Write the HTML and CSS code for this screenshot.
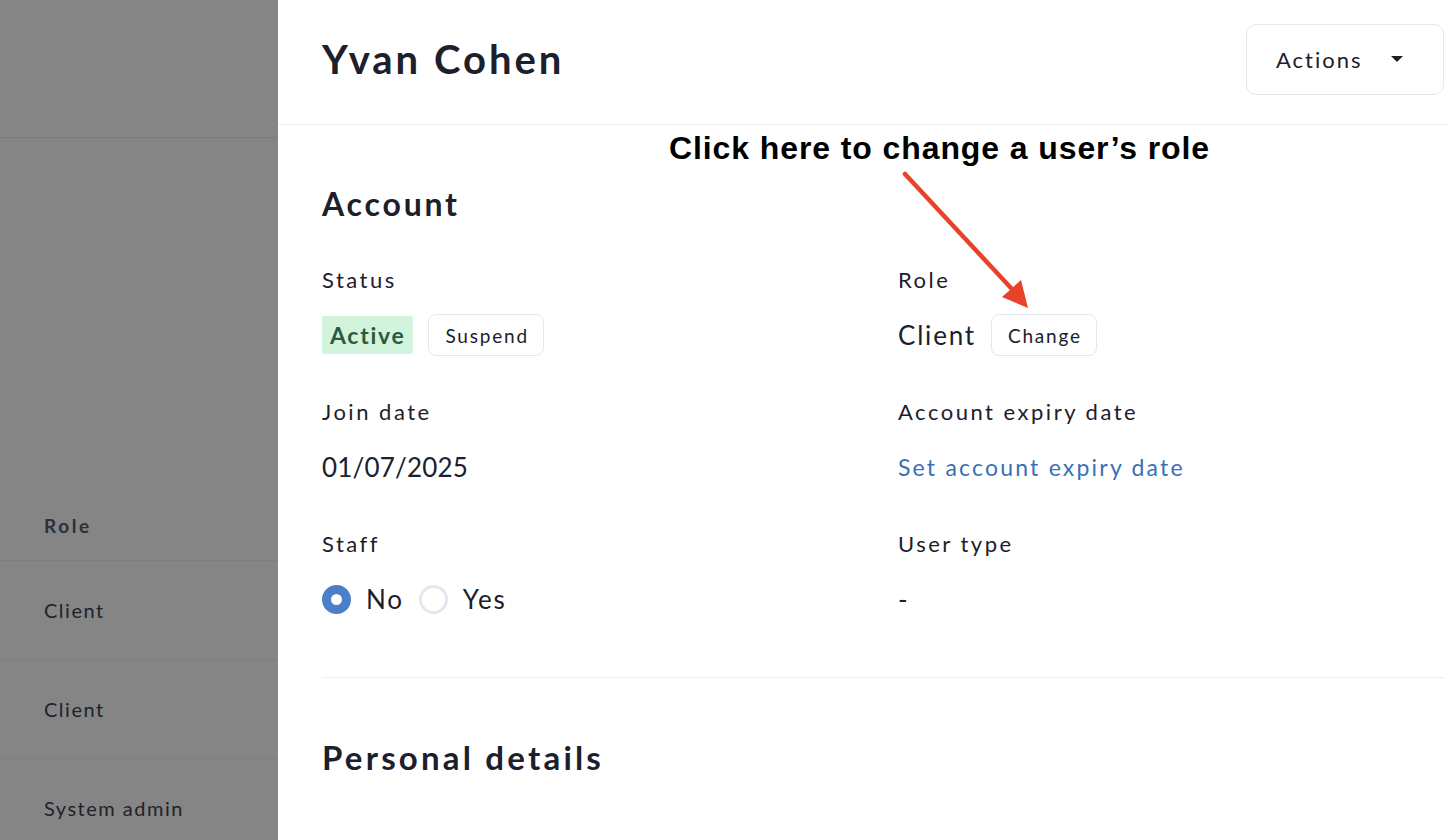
FILE: index.html
```html
<!DOCTYPE html>
<html lang="en">
<head>
<meta charset="utf-8">
<title>Yvan Cohen</title>
<link rel="stylesheet" href="styles.css">
</head>
<body>
<div class="app">
  <aside class="backdrop">
    <div class="backdrop-top"></div>
    <div class="backdrop-table">
      <div class="backdrop-head">Role</div>
      <div class="backdrop-row">Client</div>
      <div class="backdrop-row">Client</div>
      <div class="backdrop-row">System admin</div>
    </div>
  </aside>

  <main class="panel">
    <header class="panel-header">
      <h1 class="panel-title">Yvan Cohen</h1>
      <button class="actions-btn" type="button">Actions <span class="caret"></span></button>
    </header>

    <section class="panel-body">
      <h2 class="section-title">Account</h2>
      <div class="fields">
        <div class="field">
          <div class="field-label">Status</div>
          <div class="field-value">
            <span class="badge-active">Active</span>
            <button class="small-btn" type="button">Suspend</button>
          </div>
        </div>
        <div class="field">
          <div class="field-label">Role</div>
          <div class="field-value">
            <span class="value-text">Client</span>
            <button class="small-btn" type="button">Change</button>
          </div>
        </div>
        <div class="field">
          <div class="field-label">Join date</div>
          <div class="field-value"><span class="value-text value-date">01/07/2025</span></div>
        </div>
        <div class="field">
          <div class="field-label">Account expiry date</div>
          <div class="field-value"><a class="link" href="#">Set account expiry date</a></div>
        </div>
        <div class="field">
          <div class="field-label">Staff</div>
          <div class="field-value radios">
            <label class="radio"><span class="radio-dot checked"></span><span class="value-text">No</span></label>
            <label class="radio"><span class="radio-dot"></span><span class="value-text">Yes</span></label>
          </div>
        </div>
        <div class="field">
          <div class="field-label">User type</div>
          <div class="field-value"><span class="value-text">-</span></div>
        </div>
      </div>
      <hr class="divider">
      <h2 class="section-title personal">Personal details</h2>
    </section>

    <div class="callout">Click here to change a user’s role</div>
    <svg class="callout-arrow" width="140" height="150" viewBox="0 0 140 150" aria-hidden="true">
      <line x1="4" y1="4" x2="110" y2="118" stroke="#e8432a" stroke-width="4.5" stroke-linecap="round"/>
      <polygon points="127,138 101,127 120,110" fill="#e8432a"/>
    </svg>
  </main>
</div>
</body>
</html>
```

FILE: styles.css
```css
* { box-sizing: border-box; }

html, body {
  margin: 0;
  padding: 0;
  height: 100%;
}

body {
  font-family: Lato, "Noto Sans", sans-serif;
  color: #1c202b;
  background: #ffffff;
  overflow: hidden;
}

.app {
  display: flex;
  width: 1448px;
  height: 840px;
}

/* dimmed page behind the drawer */
.backdrop {
  width: 278px;
  flex: none;
  background: #858585;
  display: flex;
  flex-direction: column;
}

.backdrop-top {
  height: 138px;
  flex: none;
  border-bottom: 1px solid #7b7b7b;
}

.backdrop-table {
  margin-top: 353px;
  flex: none;
}

.backdrop-head {
  height: 70px;
  padding-left: 44px;
  display: flex;
  align-items: center;
  font-size: 19px;
  font-weight: 700;
  letter-spacing: 2.6px;
  color: #2b303b;
  border-bottom: 1px solid #7d7e82;
}

.backdrop-row {
  height: 99px;
  padding-left: 44px;
  display: flex;
  align-items: center;
  font-size: 20px;
  letter-spacing: 1.5px;
  color: #1e222b;
  border-bottom: 1px solid #7d7e82;
}

/* drawer */
.panel {
  flex: 1;
  position: relative;
  background: #ffffff;
}

.panel-header {
  height: 125px;
  border-bottom: 1px solid #eceef2;
  display: flex;
  align-items: center;
  justify-content: space-between;
  padding: 0 4px 6px 44px;
}

.panel-title {
  margin: 0;
  font-size: 40px;
  font-weight: 700;
  letter-spacing: 3px;
  color: #1c202b;
}

.actions-btn {
  width: 198px;
  height: 71px;
  border: 1px solid #e2e8f0;
  border-radius: 10px;
  background: #ffffff;
  font-family: inherit;
  font-size: 22px;
  letter-spacing: 2px;
  color: #1c202b;
  display: flex;
  align-items: center;
  justify-content: space-between;
  padding: 0 40px 0 29px;
}

.caret {
  width: 0;
  height: 0;
  border-left: 6px solid transparent;
  border-right: 6px solid transparent;
  border-top: 6px solid #1c202b;
}

.panel-body {
  padding: 59px 4px 0 44px;
}

.section-title {
  margin: 0;
  height: 40px;
  line-height: 40px;
  font-size: 32px;
  font-weight: 700;
  letter-spacing: 2.8px;
  color: #1c202b;
}

.fields {
  margin-top: 41px;
  display: grid;
  grid-template-columns: 576px 1fr;
  row-gap: 41px;
}

.field-label {
  height: 30px;
  line-height: 30px;
  font-size: 22px;
  letter-spacing: 2.5px;
  color: #1c202b;
}

.field-value {
  margin-top: 19px;
  height: 42px;
  display: flex;
  align-items: center;
  gap: 15px;
}

.value-text {
  font-size: 26px;
  letter-spacing: 1.8px;
  color: #1c202b;
}

.value-text.value-date {
  letter-spacing: 0.2px;
}

.badge-active {
  height: 38px;
  padding: 0 8px;
  display: inline-flex;
  align-items: center;
  background: #d2f4dc;
  color: #2c5a3c;
  font-size: 23px;
  font-weight: 700;
  letter-spacing: 1.7px;
  border-radius: 2px;
}

.small-btn {
  height: 42px;
  padding: 0 14px 0 16px;
  border: 1px solid #e2e8f0;
  border-radius: 8px;
  background: #ffffff;
  font-family: inherit;
  font-size: 19px;
  letter-spacing: 1.8px;
  color: #1c202b;
}

.link {
  font-size: 23px;
  color: #3b6fb6;
  text-decoration: none;
  letter-spacing: 2.2px;
}

.radios {
  gap: 15px;
}

.radio {
  display: inline-flex;
  align-items: center;
  gap: 15px;
}

.radio-dot {
  width: 29px;
  height: 29px;
  border-radius: 50%;
  border: 3px solid #e2e8f0;
  background: #ffffff;
}

.radio-dot.checked {
  border: 9.5px solid #4a80c9;
}

.divider {
  margin: 57px 0 0;
  border: 0;
  border-top: 1px solid #eceef2;
}

.section-title.personal {
  margin-top: 59px;
  font-size: 33px;
  letter-spacing: 3.2px;
}

/* annotation overlay */
.callout {
  position: absolute;
  left: 391px;
  top: 130px;
  font-family: "Liberation Sans", Arial, sans-serif;
  font-size: 32px;
  font-weight: 700;
  letter-spacing: 0.9px;
  color: #000000;
  white-space: nowrap;
}

.callout-arrow {
  position: absolute;
  left: 623px;
  top: 170px;
}
```
